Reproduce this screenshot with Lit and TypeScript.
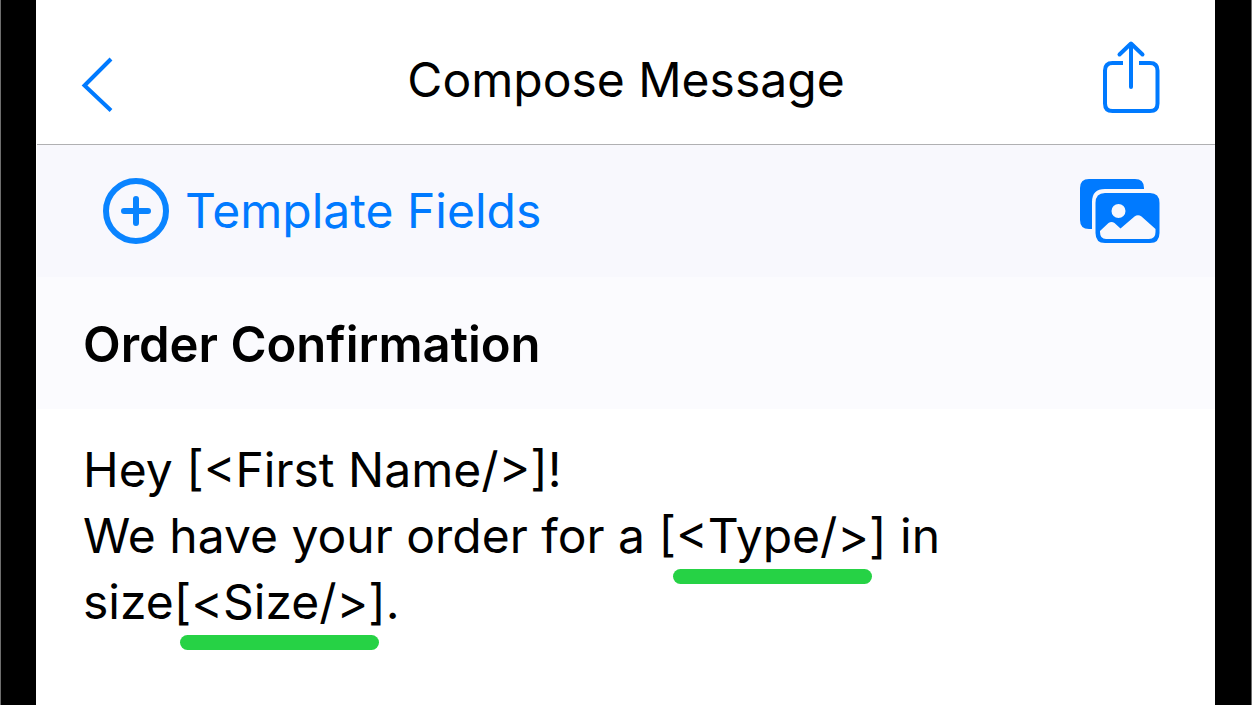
import { LitElement, html, css } from "lit";
import { customElement, property } from "lit/decorators.js";

@customElement("compose-header")
class ComposeHeader extends LitElement {
  static styles = css`
    :host {
      display: block;
    }
    .bar {
      display: grid;
      grid-template-columns: 80px 1fr 80px;
      align-items: center;
      height: 144px;
      padding: 0 44px;
      background: #fff;
      border-bottom: 1px solid #b0b0b2;
    }
    .title {
      margin: 0;
      padding-top: 16px;
      font-size: 48px;
      line-height: 66px;
      font-weight: 400;
      text-align: center;
      white-space: nowrap;
    }
    .icon-button {
      display: flex;
      margin: 0;
      padding: 0;
      border: 0;
      background: none;
      color: #007aff;
      cursor: pointer;
    }
    .back {
      justify-self: start;
      padding-top: 26px;
    }
    .share {
      justify-self: end;
      padding: 10px 11px 0 0;
    }
  `;

  @property() heading = "";

  render() {
    return html`
      <header class="bar">
        <button class="icon-button back" aria-label="Back">
          <svg width="34" height="56" viewBox="0 0 34 56" fill="none" stroke="currentColor" stroke-width="4">
            <path d="M30 2 3.500 28.500 30 53.500" />
          </svg>
        </button>
        <h1 class="title">${this.heading}</h1>
        <button class="icon-button share" aria-label="Share">
          <svg width="58" height="74" viewBox="0 0 58 74" fill="none" stroke="currentColor" stroke-width="4">
            <path d="M21 23H10.500Q3 23 3 30.500V63.500Q3 71 10.500 71H48Q55.500 71 55.500 63.500V30.500Q55.500 23 48 23H37" />
            <path d="M29 47V4M17.500 14.500 29 3.500 40.500 14.500" stroke-linecap="round" stroke-linejoin="round" />
          </svg>
        </button>
      </header>
    `;
  }
}

@customElement("compose-toolbar")
class ComposeToolbar extends LitElement {
  static styles = css`
    :host {
      display: block;
    }
    .toolbar {
      display: flex;
      align-items: center;
      justify-content: space-between;
      height: 132px;
      padding: 0 55px 0 66px;
      background: #f8f8fd;
    }
    .tool {
      display: flex;
      align-items: center;
      gap: 16px;
      margin: 0;
      padding: 0;
      border: 0;
      background: none;
      color: #007aff;
      font: inherit;
      font-size: 48px;
      line-height: 66px;
      white-space: nowrap;
      cursor: pointer;
    }
    .plus {
      color: #0a84ff;
    }
  `;

  render() {
    return html`
      <div class="toolbar">
        <button class="tool">
          <svg class="plus" width="66" height="66" viewBox="0 0 66 66" fill="none" stroke="currentColor" stroke-width="6" stroke-linecap="round" aria-hidden="true">
            <circle cx="33" cy="33" r="30" />
            <path d="M33 21V45M21 33H45" />
          </svg>
          <span>Template Fields</span>
        </button>
        <button class="tool" aria-label="Insert photo">
          <svg width="80" height="64" viewBox="0 0 80 64" fill="currentColor">
            <path d="M0 9Q0 0 9 0H55Q64 0 64 9V10H25Q12 10 12 23V50H9Q0 50 0 41Z" />
            <path fill-rule="evenodd" d="M25 14H70Q79.500 14 79.500 24V54Q79.500 64 70 64H25Q15.500 64 15.500 54V24Q15.500 14 25 14ZM38.500 25A7 7 0 1 0 38.500 39A7 7 0 1 0 38.500 25ZM20 52V53Q20 60 26 60H69Q75.500 60 75.500 53V50L61.500 37.500Q58 35 54.500 37.500L40.500 49.500L34.500 44Q31.500 42 28.500 44Z" />
          </svg>
        </button>
      </div>
    `;
  }
}

@customElement("app-root")
class AppRoot extends LitElement {
  static styles = css`
    :host {
      display: block;
      font-family: Inter, "Liberation Sans", sans-serif;
      color: #000;
    }
    .device {
      box-sizing: border-box;
      min-height: 100vh;
      padding: 0 36px 0 35px;
      border: solid #6e6e6e;
      border-width: 0 1px;
      background: #000;
    }
    .screen {
      box-sizing: border-box;
      min-height: 100vh;
      padding-left: 1px;
      background: #fff;
    }
    .subject {
      display: block;
      box-sizing: border-box;
      width: 100%;
      height: 132px;
      margin: 0;
      padding: 2px 46px 0;
      border: 0;
      outline: none;
      border-radius: 0;
      background: #fbfbfe;
      color: inherit;
      font: inherit;
      font-size: 49px;
      font-weight: 600;
    }
    .message {
      padding: 28px 46px;
      font-size: 48px;
      line-height: 66px;
      outline: none;
    }
    .line {
      margin: 0;
    }
    .field {
      position: relative;
      white-space: nowrap;
    }
    .field::after {
      content: "";
      position: absolute;
      left: 0;
      right: 0;
      bottom: -19px;
      width: 199px;
      height: 15px;
      margin: 0 auto;
      border-radius: 8px;
      background: #26d245;
    }
  `;

  render() {
    return html`
      <div class="device">
        <main class="screen">
          <compose-header heading="Compose Message"></compose-header>
          <compose-toolbar></compose-toolbar>
          <input class="subject" type="text" aria-label="Subject" .value=${"Order Confirmation"} />
          <div class="message" role="textbox" aria-label="Message" aria-multiline="true" contenteditable="true">
            <p class="line">Hey [&lt;First Name/&gt;]!</p>
            <p class="line">We have your order for a <span class="field">[&lt;Type/&gt;]</span> in<br />size<span class="field">[&lt;Size/&gt;]</span>.</p>
          </div>
        </main>
      </div>
    `;
  }
}
